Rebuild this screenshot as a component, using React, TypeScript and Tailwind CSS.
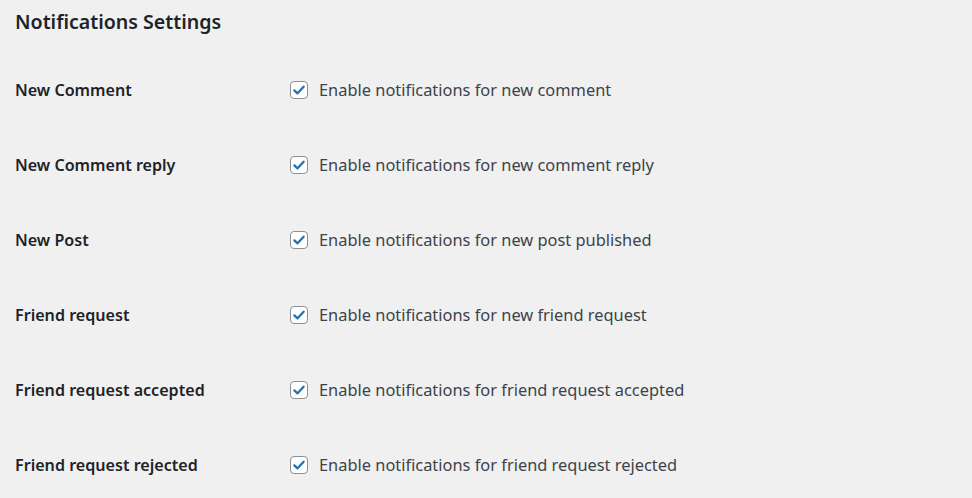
const rows = [
  { label: "New Comment", text: "Enable notifications for new comment" },
  { label: "New Comment reply", text: "Enable notifications for new comment reply" },
  { label: "New Post", text: "Enable notifications for new post published" },
  { label: "Friend request", text: "Enable notifications for new friend request" },
  { label: "Friend request accepted", text: "Enable notifications for friend request accepted" },
  { label: "Friend request rejected", text: "Enable notifications for friend request rejected" },
];

function CheckBox() {
  return (
    <span className="flex h-[18px] w-[18px] shrink-0 items-center justify-center rounded-[4px] border border-[#8c8f94] bg-white">
      <svg viewBox="0 0 20 20" className="h-[16px] w-[16px]">
        <path
          d="M4.2 10.4 L8.2 14.2 L15.8 5.8"
          fill="none"
          stroke="#2271b1"
          strokeWidth="2.8"
          strokeLinecap="round"
          strokeLinejoin="round"
        />
      </svg>
    </span>
  );
}

export default function App() {
  return (
    <div className="min-h-[498px] w-full bg-[#f0f0f1] pl-[15px] font-['Noto_Sans',sans-serif]">
      <h2 className="flex h-[53px] items-center pb-[10px] text-[19.6px] font-semibold text-[#1d2327]">
        Notifications Settings
      </h2>
      <div className="flex flex-col">
        {rows.map((row) => (
          <div key={row.label} className="flex h-[75px] items-center">
            <div className="w-[275px] shrink-0 text-[16.1px] font-semibold text-[#1d2327]">
              {row.label}
            </div>
            <label className="flex items-center gap-[11px] text-[16.4px] text-[#3c434a]">
              <CheckBox />
              {row.text}
            </label>
          </div>
        ))}
      </div>
    </div>
  );
}
